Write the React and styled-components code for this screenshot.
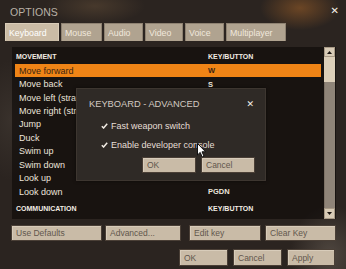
import React from 'react';
import styled, { createGlobalStyle } from 'styled-components';

const GlobalStyle = createGlobalStyle`
  html, body {
    margin: 0;
    padding: 0;
    background: #2b2420;
  }
  * {
    box-sizing: border-box;
  }
`;

const tabs = ['Keyboard', 'Mouse', 'Audio', 'Video', 'Voice', 'Multiplayer'];
const tabWidths = [54, 41, 39, 38, 39, 60];

// rows under the dialog keep their key column empty (hidden in the shot)
const bindings = [
  { action: 'Move forward', key: 'W', selected: true },
  { action: 'Move back', key: 'S' },
  { action: 'Move left (strafe)', key: '' },
  { action: 'Move right (strafe)', key: '' },
  { action: 'Jump', key: '' },
  { action: 'Duck', key: '' },
  { action: 'Swim up', key: '' },
  { action: 'Swim down', key: '' },
  { action: 'Look up', key: '' },
  { action: 'Look down', key: 'PGDN' },
];

const App = () => {
  return (
    <>
      <GlobalStyle />
      <Window>
        <TitleBar>
          <Title>OPTIONS</Title>
          <CloseX>✕</CloseX>
        </TitleBar>

        <TabRow>
          {tabs.map((t, i) => (
            <Tab key={t} $active={i === 0} $w={tabWidths[i]}>
              {t}
            </Tab>
          ))}
        </TabRow>

        <Panel>
          <List>
            <SectionHeader>
              <span>MOVEMENT</span>
              <KeyHead>KEY/BUTTON</KeyHead>
            </SectionHeader>
            {bindings.map((b) => (
              <Row key={b.action} $selected={b.selected}>
                <ActionCell>{b.action}</ActionCell>
                <KeyCell>{b.key}</KeyCell>
              </Row>
            ))}
            <SectionHeader $gap={3}>
              <span>COMMUNICATION</span>
              <KeyHead>KEY/BUTTON</KeyHead>
            </SectionHeader>
          </List>
          <ScrollBar>
            <ScrollButton>
              <svg width="5" height="3" viewBox="0 0 5 3">
                <path d="M0 3 L2.5 0 L5 3 Z" fill="#1a1410" />
              </svg>
            </ScrollButton>
            <Thumb />
            <Track />
            <ScrollButton $down>
              <svg width="5" height="3" viewBox="0 0 5 3">
                <path d="M0 0 L2.5 3 L5 0 Z" fill="#1a1410" />
              </svg>
            </ScrollButton>
          </ScrollBar>
        </Panel>

        <ButtonRow>
          <Group>
            <Button $w={91}>Use Defaults</Button>
            <Button $w={76}>Advanced...</Button>
          </Group>
          <Group $gap={4}>
            <Button $w={72}>Edit key</Button>
            <Button $w={71}>Clear Key</Button>
          </Group>
        </ButtonRow>

        <FooterRow>
          <Button $w={49} $h={17}>OK</Button>
          <Button $w={49} $h={17}>Cancel</Button>
          <Button $w={48} $h={17}>Apply</Button>
        </FooterRow>

        <Dialog>
          <DialogHeader>
            <DialogTitle>KEYBOARD - ADVANCED</DialogTitle>
            <DialogClose>✕</DialogClose>
          </DialogHeader>
          <CheckRow $first>
            <CheckMark />
            <span>Fast weapon switch</span>
          </CheckRow>
          <CheckRow>
            <CheckMark />
            <span>Enable developer console</span>
          </CheckRow>
          <DialogButtons>
            <Button $w={54} $h={16}>OK</Button>
            <Button $w={54} $h={16}>Cancel</Button>
          </DialogButtons>
        </Dialog>

        <Cursor width="10" height="15" viewBox="0 0 10 15">
          <path
            d="M0.5 0.5 L0.5 12 L3.2 9.4 L5.2 14 L7 13.2 L5 8.8 L8.6 8.8 Z"
            fill="#ffffff"
            stroke="#111"
            strokeWidth="1"
            strokeLinejoin="round"
          />
        </Cursor>
      </Window>
    </>
  );
};

const CheckMark = () => (
  <svg width="7" height="6" viewBox="0 0 7 6">
    <path d="M0.8 3.2 L2.6 5 L6.2 0.8" fill="none" stroke="#f2ece4" strokeWidth="1.5" />
  </svg>
);

const Window = styled.div`
  position: relative;
  width: 346px;
  height: 269px;
  overflow: hidden;
  font-family: 'Liberation Sans', Arial, sans-serif;
  background:
    radial-gradient(ellipse 40px 22px at 300px 8px, rgba(150, 92, 40, 0.6), transparent),
    radial-gradient(ellipse 50px 18px at 95px 6px, rgba(105, 82, 58, 0.45), transparent),
    radial-gradient(ellipse 40px 50px at 330px 255px, rgba(115, 105, 95, 0.5), transparent),
    radial-gradient(ellipse 30px 60px at 10px 120px, rgba(70, 62, 55, 0.5), transparent),
    #2b2420;
`;

const TitleBar = styled.div`
  height: 23px;
  display: flex;
  align-items: center;
  justify-content: space-between;
  padding: 0 7px 0 10px;
`;

const Title = styled.div`
  font-size: 10.5px;
  color: #b9b0a6;
  letter-spacing: 0.1px;
`;

const CloseX = styled.div`
  font-family: 'DejaVu Sans', sans-serif;
  font-size: 10px;
  font-weight: bold;
  color: #f4f0ea;
  margin-top: -2px;
`;

const TabRow = styled.div`
  display: flex;
  gap: 2px;
  padding-left: 5px;
  height: 18px;
`;

const Tab = styled.div`
  width: ${(p) => p.$w}px;
  height: 18px;
  display: flex;
  align-items: center;
  padding-left: 3px;
  font-size: 8.8px;
  color: ${(p) => (p.$active ? '#ffffff' : '#f0e8dd')};
  background: ${(p) => (p.$active ? '#cbbca6' : '#b0a390')};
  border: 1px solid ${(p) => (p.$active ? '#d9ccb8' : '#8e8272')};
  border-bottom: none;
`;

const Panel = styled.div`
  margin: 6px 0 0 12px;
  width: 324px;
  height: 172px;
  display: flex;
  gap: 3px;
  padding: 0 1px 0 3px;
  background: rgba(12, 9, 7, 0.6);
`;

const List = styled.div`
  flex: 1;
  padding-top: 2px;
  display: flex;
  flex-direction: column;
`;

const SectionHeader = styled.div`
  height: 15px;
  margin-top: ${(p) => p.$gap || 0}px;
  display: flex;
  align-items: center;
  padding-left: 1px;
  font-size: 7px;
  font-weight: bold;
  color: #f2ece4;
`;

const KeyHead = styled.span`
  margin-left: auto;
  width: 113px;
`;

const Row = styled.div`
  height: 13.45px;
  display: flex;
  align-items: center;
  padding-left: 4px;
  background: ${(p) => (p.$selected ? '#ef8416' : 'transparent')};
  color: ${(p) => (p.$selected ? '#3a2412' : '#ece5dc')};
`;

const ActionCell = styled.span`
  font-size: 9px;
  flex: 1;
`;

const KeyCell = styled.span`
  width: 113px;
  font-size: 7.5px;
  font-weight: bold;
`;

const ScrollBar = styled.div`
  width: 11px;
  display: flex;
  flex-direction: column;
`;

const ScrollButton = styled.div`
  height: ${(p) => (p.$down ? 11 : 10)}px;
  display: flex;
  align-items: center;
  justify-content: center;
  background: #d8cbb6;
  border: 1px solid #a89a86;
`;

const Thumb = styled.div`
  height: 25px;
  background: #dccfb9;
`;

const Track = styled.div`
  flex: 1;
  background: #8f8478;
  border-left: 1px solid #7d7266;
`;

const ButtonRow = styled.div`
  margin-top: 6px;
  display: flex;
  justify-content: space-between;
  padding: 0 10px 0 11px;
`;

const Group = styled.div`
  display: flex;
  gap: ${(p) => p.$gap || 3}px;
`;

const FooterRow = styled.div`
  margin-top: 8px;
  display: flex;
  justify-content: flex-end;
  gap: 5px;
  padding-right: 11px;
`;

const Button = styled.div`
  width: ${(p) => p.$w}px;
  height: ${(p) => p.$h || 16}px;
  display: flex;
  align-items: center;
  padding-left: 4px;
  font-size: 8.5px;
  color: #62574d;
  background: #c9bba7;
  border: 1px solid #4a3f36;
  box-shadow: inset 1px 1px 0 #d8ccba;
`;

const Dialog = styled.div`
  position: absolute;
  left: 76px;
  top: 88px;
  width: 190px;
  height: 93px;
  display: flex;
  flex-direction: column;
  padding: 8px 10px 0 12px;
  background: #2f2a26;
  border: 1px solid #3d3630;
  box-shadow: 0 0 3px rgba(0, 0, 0, 0.5);
`;

const DialogHeader = styled.div`
  height: 14px;
  display: flex;
  align-items: center;
  justify-content: space-between;
`;

const DialogTitle = styled.div`
  font-size: 9.3px;
  color: #d3cbc2;
`;

const DialogClose = styled.div`
  font-family: 'DejaVu Sans', sans-serif;
  font-size: 9px;
  font-weight: bold;
  color: #f4f0ea;
  margin-right: 1px;
`;

const CheckRow = styled.div`
  height: 19px;
  margin-top: ${(p) => (p.$first ? 5 : 0)}px;
  display: flex;
  align-items: center;
  gap: 3px;
  padding-left: 12px;
  font-size: 9px;
  color: #e6dfd6;
`;

const DialogButtons = styled.div`
  margin-top: 3px;
  display: flex;
  justify-content: flex-end;
  gap: 5px;
`;

const Cursor = styled.svg`
  position: absolute;
  left: 197px;
  top: 143px;
`;

export default App;
